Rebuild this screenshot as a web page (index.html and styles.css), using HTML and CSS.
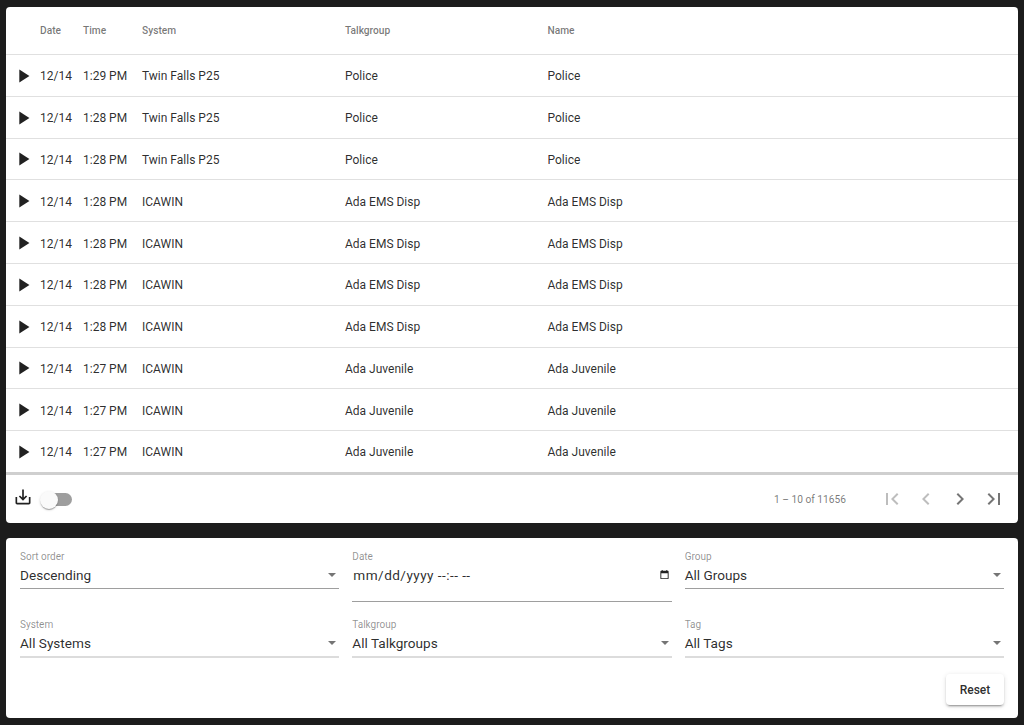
FILE: index.html
```html
<!DOCTYPE html>
<html lang="en">
<head>
<meta charset="utf-8">
<title>Call search</title>
<link rel="stylesheet" href="styles.css">
</head>
<body>
<main class="page">
<section class="card results">
<div class="row head"><span></span><span>Date</span><span>Time</span><span>System</span><span>Talkgroup</span><span>Name</span></div>
<div class="row"><svg class="play" viewBox="0 0 24 24"><path d="M8 5v14l11-7z"/></svg><span>12/14</span><span>1:29 PM</span><span>Twin Falls P25</span><span>Police</span><span>Police</span></div>
<div class="row"><svg class="play" viewBox="0 0 24 24"><path d="M8 5v14l11-7z"/></svg><span>12/14</span><span>1:28 PM</span><span>Twin Falls P25</span><span>Police</span><span>Police</span></div>
<div class="row"><svg class="play" viewBox="0 0 24 24"><path d="M8 5v14l11-7z"/></svg><span>12/14</span><span>1:28 PM</span><span>Twin Falls P25</span><span>Police</span><span>Police</span></div>
<div class="row"><svg class="play" viewBox="0 0 24 24"><path d="M8 5v14l11-7z"/></svg><span>12/14</span><span>1:28 PM</span><span>ICAWIN</span><span>Ada EMS Disp</span><span>Ada EMS Disp</span></div>
<div class="row"><svg class="play" viewBox="0 0 24 24"><path d="M8 5v14l11-7z"/></svg><span>12/14</span><span>1:28 PM</span><span>ICAWIN</span><span>Ada EMS Disp</span><span>Ada EMS Disp</span></div>
<div class="row"><svg class="play" viewBox="0 0 24 24"><path d="M8 5v14l11-7z"/></svg><span>12/14</span><span>1:28 PM</span><span>ICAWIN</span><span>Ada EMS Disp</span><span>Ada EMS Disp</span></div>
<div class="row"><svg class="play" viewBox="0 0 24 24"><path d="M8 5v14l11-7z"/></svg><span>12/14</span><span>1:28 PM</span><span>ICAWIN</span><span>Ada EMS Disp</span><span>Ada EMS Disp</span></div>
<div class="row"><svg class="play" viewBox="0 0 24 24"><path d="M8 5v14l11-7z"/></svg><span>12/14</span><span>1:27 PM</span><span>ICAWIN</span><span>Ada Juvenile</span><span>Ada Juvenile</span></div>
<div class="row"><svg class="play" viewBox="0 0 24 24"><path d="M8 5v14l11-7z"/></svg><span>12/14</span><span>1:27 PM</span><span>ICAWIN</span><span>Ada Juvenile</span><span>Ada Juvenile</span></div>
<div class="row last"><svg class="play" viewBox="0 0 24 24"><path d="M8 5v14l11-7z"/></svg><span>12/14</span><span>1:27 PM</span><span>ICAWIN</span><span>Ada Juvenile</span><span>Ada Juvenile</span></div>
<div class="foot">
<svg class="download" viewBox="0 0 24 24"><path d="M19 12v7H5v-7H3v7c0 1.1.9 2 2 2h14c1.100 0 2-.9 2-2v-7h-2zm-6 .67l2.590-2.580L17 11.500l-5 5-5-5 1.410-1.410L11 12.670V3h2z"/></svg>
<div class="toggle"><div class="track"></div><div class="thumb"></div></div>
<div class="range">1 – 10 of 11656</div>
<div class="pager">
<svg class="off" viewBox="0 0 24 24"><path d="M18.410 16.590L13.820 12l4.590-4.590L17 6l-6 6 6 6zM6 6h2v12H6z"/></svg>
<svg class="off" viewBox="0 0 24 24"><path d="M15.410 7.410L14 6l-6 6 6 6 1.410-1.410L10.830 12z"/></svg>
<svg viewBox="0 0 24 24"><path d="M10 6L8.590 7.410 13.170 12l-4.580 4.590L10 18l6-6z"/></svg>
<svg viewBox="0 0 24 24"><path d="M5.590 7.410L10.180 12l-4.590 4.590L7 18l6-6-6-6zM16 6h2v12h-2z"/></svg>
</div>
</div>
</section>
<section class="card filters">
<div class="grid">
<div class="field"><label>Sort order</label><div class="value"><span>Descending</span><i class="caret"></i></div></div>
<div class="field date"><label>Date</label><div class="value"><span class="dt">mm/dd/yyyy --:-- --</span><svg class="cal" viewBox="0 0 24 24"><path d="M19 4h-1V2h-2v2H8V2H6v2H5c-1.100 0-2 .9-2 2v14c0 1.100.9 2 2 2h14c1.100 0 2-.9 2-2V6c0-1.100-.9-2-2-2zm0 16H5V9h14v11z"/></svg></div></div>
<div class="field"><label>Group</label><div class="value"><span>All Groups</span><i class="caret"></i></div></div>
<div class="field lower"><label>System</label><div class="value"><span>All Systems</span><i class="caret"></i></div></div>
<div class="field lower"><label>Talkgroup</label><div class="value"><span>All Talkgroups</span><i class="caret"></i></div></div>
<div class="field lower"><label>Tag</label><div class="value"><span>All Tags</span><i class="caret"></i></div></div>
</div>
<div class="actions"><button class="reset" type="button">Reset</button></div>
</section>
</main>
</body>
</html>
```
FILE: styles.css
```css
* { box-sizing: border-box; }
html, body { margin: 0; height: 725px; overflow: hidden; }
body { background: #1c1c1c; font-family: Roboto, "Liberation Sans", sans-serif; color: rgba(0,0,0,.84); }
.page { padding: 7px 6px 0; display: flex; flex-direction: column; gap: 15px; }
.card { background: #fff; border-radius: 4px; }
.results { height: 516px; display: flex; flex-direction: column; }
.row { display: grid; grid-template-columns: 34px 43px 59px 203px 202.500px 1fr; align-items: center; height: 41.800px; padding-top: 2px; border-bottom: 1px solid #e0e0e0; font-size: 12px; }
.row.head { height: 48px; font-size: 10.200px; font-weight: 500; color: rgba(0,0,0,.54); padding: 0 0 1px; }
.row.last { border-bottom: 3px solid #cfcfcf; height: 43.500px; }
.play { width: 22px; height: 22px; margin: -1px 0 0 6px; fill: #212121; }
.foot { flex: 1; display: flex; align-items: center; padding: 0 12px 0 7px; }
.download { width: 20px; height: 20px; fill: #212121; margin-top: -4px; }
.toggle { position: relative; width: 32px; height: 20px; margin-left: 7px; }
.track { position: absolute; left: 3px; top: 4px; width: 29px; height: 13px; border-radius: 7px; background: #9e9e9e; }
.thumb { position: absolute; left: 0; top: 2px; width: 18px; height: 18px; border-radius: 50%; background: #fafafa; box-shadow: 0 2px 1px -1px rgba(0,0,0,.2), 0 1px 1px rgba(0,0,0,.14), 0 1px 3px rgba(0,0,0,.12); }
.range { margin: 1px 34px 0 auto; font-size: 10.200px; color: rgba(0,0,0,.54); }
.pager { display: flex; gap: 10px; margin-top: 1px; }
.pager svg { width: 24px; height: 24px; fill: rgba(0,0,0,.54); }
.pager svg.off { fill: rgba(0,0,0,.26); }
.filters { height: 180px; padding: 0 14px; display: flex; flex-direction: column; }
.grid { display: grid; grid-template-columns: repeat(3, 1fr); column-gap: 13px; row-gap: 15.500px; padding-top: 12px; }
.field label { display: block; font-size: 10px; line-height: 13px; color: rgba(0,0,0,.44); }
.value { display: flex; align-items: center; justify-content: space-between; height: 26px; border-bottom: 1px solid #9e9e9e; font-size: 13.600px; padding: 0 3px 2px 0; }
.lower .value { height: 27px; border-bottom: 2px solid #dcdcdc; padding-bottom: 0; }
.date { align-self: start; }
.date .value { height: 39px; align-items: flex-start; padding: 4px 2px 0 1px; }
.dt { letter-spacing: .45px; }
.cal { width: 11px; height: 11px; fill: #222; margin-top: 2px; }
.caret { width: 0; height: 0; border-left: 4.500px solid transparent; border-right: 4.500px solid transparent; border-top: 4.500px solid rgba(0,0,0,.54); }
.actions { display: flex; justify-content: flex-end; margin-top: 16.500px; }
.reset { width: 58px; height: 31px; border: 0; border-radius: 4px; background: #fff; font: 500 12px Roboto, sans-serif; color: rgba(0,0,0,.84); box-shadow: 0 3px 1px -2px rgba(0,0,0,.2), 0 2px 2px rgba(0,0,0,.14), 0 1px 5px rgba(0,0,0,.12); }
```
